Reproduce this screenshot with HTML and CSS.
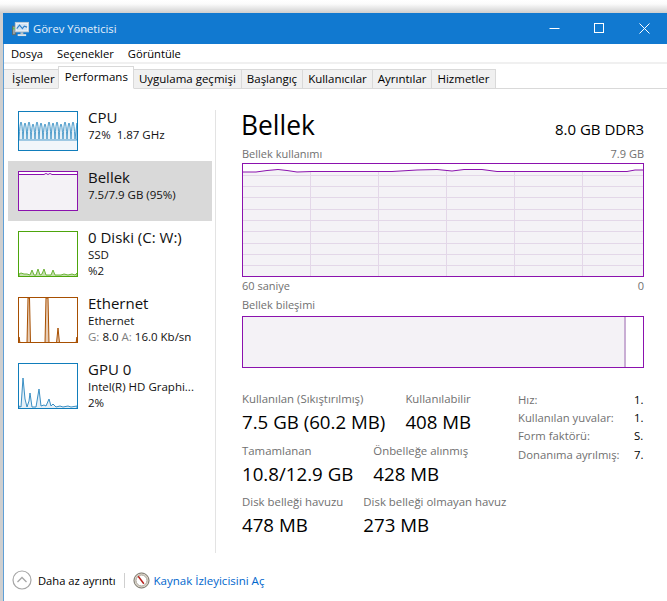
FILE: index.html
```html
<!DOCTYPE html>
<html lang="tr">
<head>
    <meta charset="UTF-8">
    <title>Görev Yöneticisi</title>
    <link rel="stylesheet" href="styles.css">
</head>
<body>
    <div class="window">
        <header class="titlebar">
            <svg class="app-icon" width="17" height="16" viewBox="0 0 18 17">
                <rect x="0.5" y="5.5" width="3" height="9" fill="#9aa5a8" stroke="#5f6b6e"/>
                <rect x="1" y="7" width="2" height="2" fill="#5fc24a"/>
                <rect x="3.5" y="1.5" width="14" height="10" fill="#eef4fa" stroke="#c4ccd2"/>
                <rect x="5" y="3" width="11" height="7" fill="#cfe3f5"/>
                <path d="M5 8 L8 4.5 L11 8 L13 5.5 L16 6.5" fill="none" stroke="#2f7fc8" stroke-width="1.2"/>
                <rect x="9" y="12" width="3" height="2" fill="#b8c0c4"/>
                <rect x="6" y="14" width="9" height="2" fill="#dfe4e7"/>
            </svg>
            <span class="app-title">Görev Yöneticisi</span>
            <div class="win-btns">
                <div class="win-btn"><svg width="11" height="11" viewBox="0 0 11 11"><path d="M0.5 5.5H10.5" stroke="#fff"/></svg></div>
                <div class="win-btn"><svg width="11" height="11" viewBox="0 0 11 11"><rect x="0.5" y="0.5" width="9" height="9" fill="none" stroke="#fff"/></svg></div>
                <div class="win-btn"><svg width="11" height="11" viewBox="0 0 11 11"><path d="M0.5 0.5L10.5 10.5M10.5 0.5L0.5 10.5" stroke="#fff"/></svg></div>
            </div>
        </header>

        <nav class="menu">
            <span>Dosya</span>
            <span>Seçenekler</span>
            <span>Görüntüle</span>
        </nav>

        <div class="tabs">
            <a class="tab">İşlemler</a>
            <a class="tab active">Performans</a>
            <a class="tab">Uygulama geçmişi</a>
            <a class="tab">Başlangıç</a>
            <a class="tab">Kullanıcılar</a>
            <a class="tab">Ayrıntılar</a>
            <a class="tab">Hizmetler</a>
        </div>

        <div class="main">
            <aside class="sidebar">
                <div class="item">
                    <svg class="thumb thumb-cpu" viewBox="1 1 58 38">
                        <rect x="1" y="27" width="58" height="12" fill="#f1f6fa"/>
                        <path d="M1 28 q2 -34 4 0 q2 -32 4 0 q2 -34 4 0 q2 -30 4 0 q2 -34 4 0 q2 -32 4 0 q2 -30 4 0 q2 -34 4 0 q2 -32 4 0 q2 -34 4 0 q2 -30 4 0 q2 -34 4 0 q2 -32 4 0 q2 -34 4 0 L59 12 V29 H1 Z" fill="#e6f0f7" stroke="#4e9ccb" stroke-width="1"/>
                    </svg>
                    <div class="item-text">
                        <div class="item-title">CPU</div>
                        <div class="item-sub">72%&nbsp; 1.87 GHz</div>
                    </div>
                </div>
                <div class="item selected">
                    <svg class="thumb thumb-mem" viewBox="1 1 58 38">
                        <rect x="1" y="4" width="58" height="35" fill="#f4f2f6"/>
                        <path d="M1 3.5 H26 L28 2.5 L30 3.5 L32 2.5 L34 3.5 H59" fill="none" stroke="#8b12ae"/>
                    </svg>
                    <div class="item-text">
                        <div class="item-title">Bellek</div>
                        <div class="item-sub">7.5/7.9 GB (95%)</div>
                    </div>
                </div>
                <div class="item">
                    <svg class="thumb thumb-disk" viewBox="1 1 58 44">
                        <path d="M1 43 L3 42 L6 43 L9 43 L12 44 L14 39 L16 44 L18 44 L20 38 L22 44 L24 43 L26 38 L28 44 L33 44 L35 39 L37 44 L43 44 L46 43 L50 44 L54 43 L57 44 L59 42 V46 H1 Z" fill="#c5e0ae" stroke="#6eb43a"/>
                    </svg>
                    <div class="item-text">
                        <div class="item-title">0 Diski (C: W:)</div>
                        <div class="item-sub">SSD</div>
                        <div class="item-sub">%2</div>
                    </div>
                </div>
                <div class="item">
                    <svg class="thumb thumb-eth" viewBox="1 1 58 44">
                        <path d="M1 40 L2 46 H9 L10 1 L11.5 1 L12.5 46 H27 L28 1 L30 1 L31 46 H38.5 L40 31 L41.5 46 H58 L59 40 V46 H1 Z" fill="#e8cdb5" stroke="#a74f01"/>
                    </svg>
                    <div class="item-text">
                        <div class="item-title">Ethernet</div>
                        <div class="item-sub">Ethernet</div>
                        <div class="item-sub"><span class="dim">G:</span> 8.0 <span class="dim">A:</span>&nbsp;16.0 Kb/sn</div>
                    </div>
                </div>
                <div class="item">
                    <svg class="thumb thumb-gpu" viewBox="1 1 58 44">
                        <path d="M1 43 L3 44 L5 15 L7 36 L9 44 L11 38 L12 30 L14 44 L18 44 L21 26 L23 43 L26 42 L28 43 L31 36 L33 43 L35 41 L38 44 L42 43 L45 44 L50 43 L53 44 L59 43 V46 H1 Z" fill="#e4eff7" stroke="#3a8fc4"/>
                    </svg>
                    <div class="item-text">
                        <div class="item-title">GPU 0</div>
                        <div class="item-sub">Intel(R) HD Graphi...</div>
                        <div class="item-sub">2%</div>
                    </div>
                </div>
            </aside>

            <div class="divider"></div>

            <section class="detail">
                <div class="detail-head">
                    <h1>Bellek</h1>
                    <span class="detail-spec">8.0 GB DDR3</span>
                </div>

                <div class="caption caption-top">
                    <span>Bellek kullanımı</span>
                    <span>7.9 GB</span>
                </div>
                <svg class="chart" width="402" height="114" viewBox="0 0 402 114">
                    <path class="chart-fill" d="M1 9 L14 9 L25 7.5 L36 6.5 L45 7.5 L55 9 L70 8.5 L150 8.5 L175 7 L195 6.5 L210 8 L222 6.5 L240 6.5 L255 8.5 L385 8.5 L393 7 L401 7 V113 H1 Z"/>
                    <path class="grid" d="M1 12.5H401M1 23.5H401M1 34.5H401M1 46.5H401M1 57.5H401M1 68.5H401M1 80.5H401M1 91.5H401M1 102.5H401"/>
                    <path class="grid" d="M68.5 8V113M136.5 8V113M204.5 8V113M272.5 8V113M340.5 8V113"/>
                    <path class="chart-line" d="M1 9 L14 9 L25 7.5 L36 6.5 L45 7.5 L55 9 L70 8.5 L150 8.5 L175 7 L195 6.5 L210 8 L222 6.5 L240 6.5 L255 8.5 L385 8.5 L393 7 L401 7"/>
                    <rect class="chart-line" x="0.5" y="0.5" width="401" height="113"/>
                </svg>
                <div class="caption caption-bottom">
                    <span>60 saniye</span>
                    <span>0</span>
                </div>

                <div class="caption caption-comp">
                    <span>Bellek bileşimi</span>
                </div>
                <div class="comp-bar">
                    <div class="comp-used"></div>
                    <div class="comp-free"></div>
                </div>

                <div class="stats">
                    <div class="stats-left">
                        <div class="stat-row">
                            <div class="stat"><label>Kullanılan (Sıkıştırılmış)</label><div class="value">7.5 GB (60.2 MB)</div></div>
                            <div class="stat"><label>Kullanılabilir</label><div class="value">408 MB</div></div>
                        </div>
                        <div class="stat-row">
                            <div class="stat"><label>Tamamlanan</label><div class="value">10.8/12.9 GB</div></div>
                            <div class="stat"><label>Önbelleğe alınmış</label><div class="value">428 MB</div></div>
                        </div>
                        <div class="stat-row">
                            <div class="stat"><label>Disk belleği havuzu</label><div class="value">478 MB</div></div>
                            <div class="stat"><label>Disk belleği olmayan havuz</label><div class="value">273 MB</div></div>
                        </div>
                    </div>
                    <div class="stats-right">
                        <span>Hız:</span><b>1.</b>
                        <span>Kullanılan yuvalar:</span><b>1.</b>
                        <span>Form faktörü:</span><b>S.</b>
                        <span>Donanıma ayrılmış:</span><b>7.</b>
                    </div>
                </div>
            </section>
        </div>

        <footer class="footer">
            <svg class="less-icon" width="20" height="20" viewBox="0 0 20 20">
                <circle cx="10" cy="10" r="9" fill="#fff" stroke="#a6a6a6" stroke-width="1.2"/>
                <path d="M5.5 12 L10 7.5 L14.5 12" fill="none" stroke="#a6a6a6" stroke-width="1.3"/>
            </svg>
            <span class="less-text">Daha az ayrıntı</span>
            <span class="footer-sep"></span>
            <svg class="gauge-icon" width="17" height="17" viewBox="0 0 18 18">
                <circle cx="9" cy="9" r="8" fill="#d8d3c8" stroke="#6f6a60"/>
                <circle cx="9" cy="9" r="5.8" fill="#fff" stroke="#a9a398"/>
                <path d="M5.5 4.5 L11.5 12.5" stroke="#b8201c" stroke-width="1.6"/>
            </svg>
            <a class="monitor-link">Kaynak İzleyicisini Aç</a>
        </footer>
    </div>
</body>
</html>
```

FILE: styles.css
```css
* {
    margin: 0;
    padding: 0;
    box-sizing: border-box;
    font-family: 'Open Sans', 'Noto Sans', sans-serif;
}
html, body {
    height: 601px;
    overflow: hidden;
}
body {
    background: linear-gradient(#ffffff, #fbfbfb 4px, #cfcfcf 13px);
    padding: 13px 0 0 3px;
    font-size: 11.5px;
    color: #000;
}
.window {
    height: 588px;
    background-color: white;
    border-left: 1px solid #5f9fd6;
}
.titlebar {
    height: 31px;
    margin-left: -1px;
    background-color: #1179d0;
    display: flex;
    align-items: center;
    padding-left: 9px;
}
.app-icon {
    margin-top: 1px;
}
.app-title {
    margin-left: 4px;
    color: #e6f0fa;
    font-size: 11.2px;
}
.win-btns {
    margin-left: auto;
    display: flex;
}
.win-btn {
    width: 45px;
    height: 31px;
    display: flex;
    align-items: center;
    justify-content: center;
}
.menu {
    height: 18px;
    padding-left: 7px;
    display: flex;
    align-items: center;
    gap: 14px;
    font-size: 11.2px;
}
.tabs {
    height: 27px;
    border-top: 2px solid #f0f0f0;
    border-bottom: 1px solid #d9d9d9;
    display: flex;
    align-items: flex-end;
    padding-top: 2px;
}
.tab {
    height: 20px;
    line-height: 18px;
    padding: 0 5px;
    margin-bottom: -1px;
    background-color: #f0f0f0;
    border: 1px solid #d9d9d9;
    border-left: 0;
}
.tab:first-child {
    padding: 0 3px 0 8px;
}
.tab.active {
    height: 23px;
    line-height: 19px;
    background-color: white;
    border-left: 1px solid #d9d9d9;
    border-bottom: 1px solid white;
    margin-left: -1px;
    padding: 0 5px 3px 6px;
}
.main {
    height: 473px;
    display: flex;
}
.sidebar {
    width: 211px;
    flex-shrink: 0;
    margin-top: 12px;
    padding-left: 4px;
    height: 442px;
}
.item {
    display: flex;
    gap: 10px;
    padding: 10px;
    width: 204px;
}
.item.selected {
    background-color: #d9d9d9;
}
.thumb {
    display: block;
    width: 60px;
    height: 46px;
    flex-shrink: 0;
    background-color: white;
    border: 1px solid #117dbb;
}
.thumb-cpu, .thumb-mem {
    height: 40px;
}
.thumb-mem {
    border-color: #8b12ae;
}
.thumb-disk {
    border-color: #4da60c;
}
.thumb-eth {
    border-color: #a74f01;
}
.item-text {
    margin: -3px 0 -2px;
    color: #111;
}
.item-title {
    font-size: 15px;
    line-height: 18px;
    margin-bottom: 1px;
    white-space: nowrap;
}
.item-sub {
    font-size: 11.5px;
    line-height: 15.5px;
    white-space: nowrap;
}
.dim {
    color: #808080;
}
.divider {
    width: 1px;
    flex-shrink: 0;
    margin: 21px 0 9px;
    background-color: #e3e3e3;
}
.detail {
    flex: 1;
    margin-top: 12px;
    padding: 7px 23px 0 26px;
}
.detail-head {
    height: 34px;
    display: flex;
    justify-content: space-between;
    align-items: center;
}
.detail-head h1 {
    font-size: 26.4px;
    font-weight: normal;
    line-height: 34px;
    margin-left: -1px;
}
.detail-spec {
    font-size: 15px;
    margin-top: 8px;
}
.caption {
    display: flex;
    justify-content: space-between;
    font-size: 11px;
    line-height: 12px;
    color: #707070;
}
.caption-top {
    margin-top: 6px;
    margin-bottom: 3px;
}
.chart {
    display: block;
}
.chart-fill {
    fill: #f4f2f6;
}
.chart-line {
    fill: none;
    stroke: #8b12ae;
}
.grid {
    fill: none;
    stroke: #e3d7e8;
}
.caption-bottom {
    margin-top: 3px;
}
.caption-comp {
    margin-top: 7px;
    margin-bottom: 5px;
}
.comp-bar {
    height: 52px;
    border: 1px solid #8b12ae;
    display: flex;
}
.comp-used {
    width: 383px;
    background-color: #f4f2f6;
    border-right: 2px solid #c9aed4;
}
.comp-free {
    flex: 1;
}
.stats {
    display: flex;
    margin-top: 23px;
}
.stats-left {
    width: 276px;
    flex-shrink: 0;
}
.stat-row {
    display: flex;
    gap: 20px;
    height: 51.5px;
}
.stat label {
    display: block;
    font-size: 11.4px;
    line-height: 16px;
    color: #707070;
    white-space: nowrap;
}
.value {
    font-size: 18.7px;
    line-height: 26px;
    margin-top: 2px;
    white-space: nowrap;
}
.stats-right {
    display: grid;
    grid-template-columns: 116px 10px;
    grid-auto-rows: 18.3px;
    align-items: center;
    align-content: start;
    font-size: 11.3px;
    color: #707070;
    margin-top: -1px;
}
.stats-right b {
    font-weight: normal;
    color: #000;
}
.footer {
    height: 30px;
    margin-top: 3px;
    display: flex;
    align-items: center;
    padding-left: 8px;
}
.less-text {
    margin-left: 6px;
    font-size: 11.2px;
}
.footer-sep {
    width: 1px;
    height: 15px;
    background-color: #cfcfcf;
    margin: 0 8px;
}
.monitor-link {
    margin-left: 4px;
    color: #0066cc;
}
```
